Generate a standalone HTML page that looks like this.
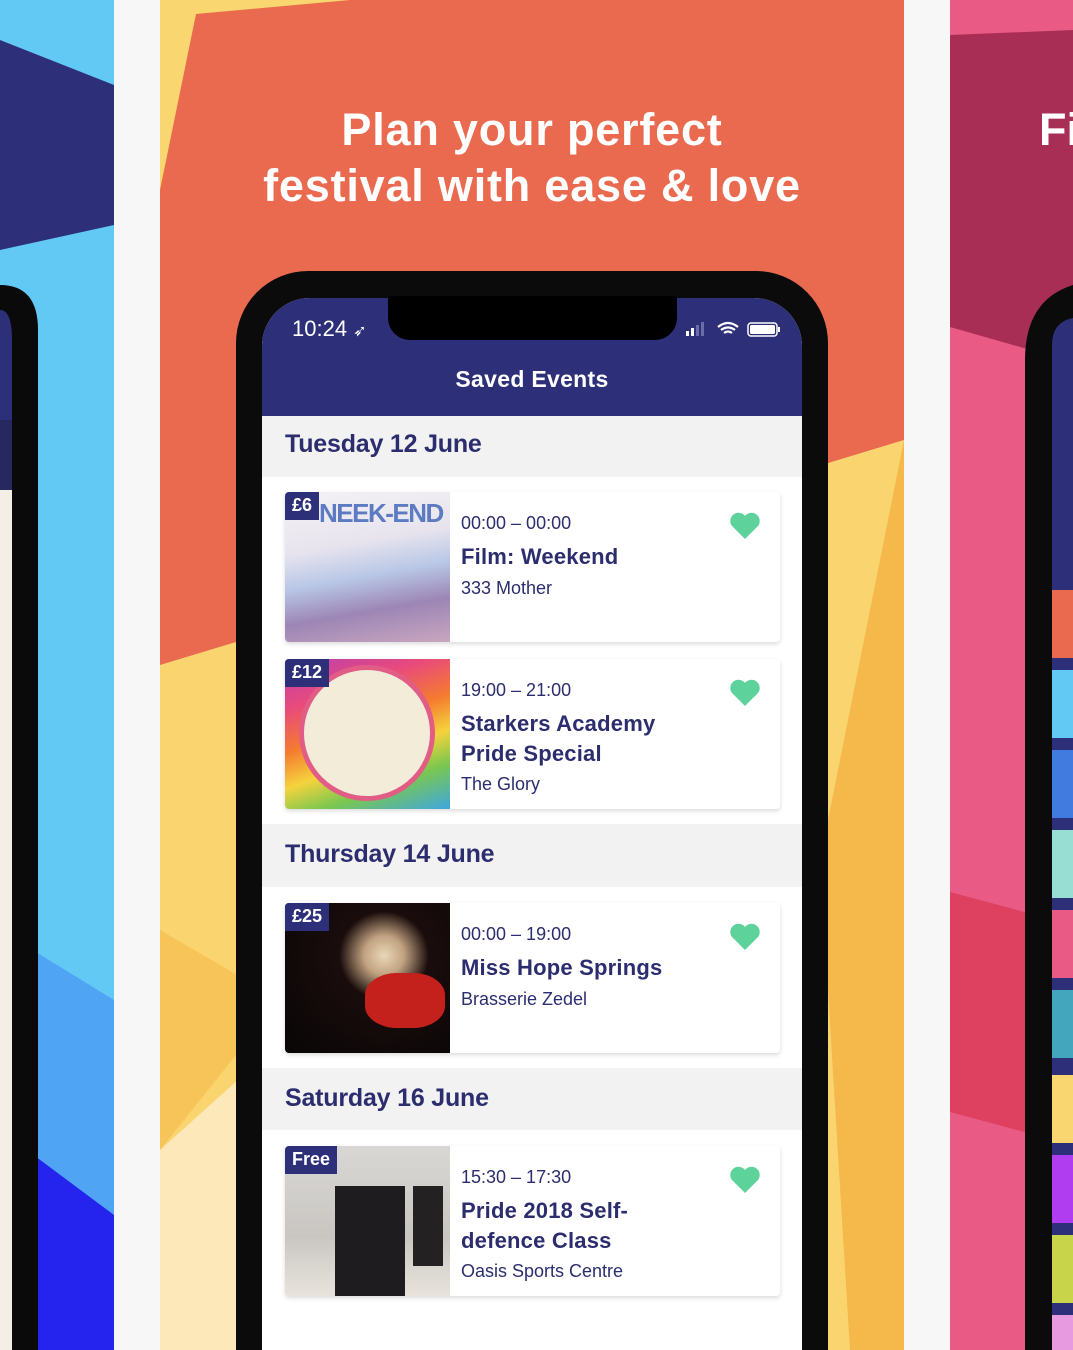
<!DOCTYPE html>
<html><head><meta charset="utf-8"><style>
*{margin:0;padding:0;box-sizing:border-box}
html{width:1073px;height:1350px;overflow:hidden}
body{width:1073px;height:1350px;overflow:hidden;background:#f7f7f7;position:relative;font-family:"Liberation Sans",sans-serif}
.abs{position:absolute}
.sec{position:absolute;left:262px;width:540px;background:#f2f2f2;color:#2b2d6e;font-weight:bold;font-size:25px;padding-left:23px;letter-spacing:-0.2px}
.card{position:absolute;left:285px;width:495px;height:150px;background:#fff;border-radius:4px;box-shadow:0 2px 5px rgba(0,0,0,.15);overflow:hidden}
.img{position:absolute;left:0;top:0;width:165px;height:150px}
.price{position:absolute;left:0;top:0;background:#2d3079;color:#fff;font-weight:bold;font-size:18px;padding:3px 7px 4px 7px}
.t{position:absolute;left:176px;top:21px;font-size:18px;color:#2b2d6e}
.n{position:absolute;left:176px;top:50px;font-size:22px;font-weight:bold;color:#2b2d6e;line-height:30px;letter-spacing:0.2px}
.v{position:absolute;left:176px;font-size:18px;color:#2b2d6e}
.heart{position:absolute;left:444px;top:20px}
</style></head><body>
<svg class="abs" style="left:0;top:0" width="114" height="1350">
<rect width="114" height="1350" fill="#62c9f5"/>
<polygon points="0,40 114,85 114,225 0,250" fill="#2d3079"/>
<polygon points="0,930 114,1000 114,1350 0,1350" fill="#4fa4f3"/>
<polygon points="0,1130 114,1215 114,1350 0,1350" fill="#2424ee"/>
<rect x="0" y="290" width="12" height="1060" fill="#f3efe6"/>
<rect x="0" y="290" width="12" height="130" fill="#2d3079"/>
<rect x="0" y="420" width="12" height="70" fill="#26285f"/>
<path d="M0,285 Q38,285 38,330 L38,1350 L12,1350 L12,340 Q12,310 0,310 Z" fill="#0a0a0a"/>
</svg>
<svg class="abs" style="left:160px;top:0" width="744" height="1350">
<rect width="744" height="1350" fill="#fad46f"/>
<polygon points="0,0 744,0 744,440 0,665" fill="#ea6a4f"/>
<polygon points="0,0 190,0 36,14 0,190" fill="#f9d66f"/>
<polygon points="744,440 744,1350 690,1350 660,860" fill="#f5b84a"/>
<polygon points="0,930 120,1000 0,1150" fill="#f7c45a"/>
<polygon points="0,1150 100,1060 120,1350 0,1350" fill="#fce8b8"/>
</svg>
<div class="abs" style="left:160px;top:102px;width:744px;text-align:center;color:#fff;font-weight:bold;font-size:45px;line-height:56px;letter-spacing:0.8px">Plan your perfect<br>festival with ease &amp; love</div>
<div class="abs" style="left:236px;top:271px;width:592px;height:1079px;background:#0b0b0b;border-radius:72px 72px 0 0"></div>
<div class="abs" style="left:262px;top:298px;width:540px;height:1052px;background:#fff;border-radius:48px 48px 0 0;overflow:hidden">
 <div class="abs" style="left:0;top:0;width:540px;height:118px;background:#2d3079"></div>
</div>
<div class="abs" style="left:388px;top:296px;width:289px;height:44px;background:#000;border-radius:0 0 22px 22px"></div>
<div class="abs" style="left:292px;top:316px;color:#fff;font-size:22px">10:24 <span style="font-size:16px">➶</span></div>
<svg class="abs" style="left:684px;top:320px" width="100" height="20">
<rect x="2" y="11" width="3" height="5" fill="#fff"/><rect x="7" y="8" width="3" height="8" fill="#fff"/><rect x="12" y="5" width="3" height="11" fill="#6a6da8"/><rect x="17" y="2" width="3" height="14" fill="#6a6da8"/>
<path d="M34,7 Q44,-1 54,7 M37,10 Q44,5 51,10 M40,13 Q44,10 48,13" stroke="#fff" stroke-width="2.2" fill="none"/>
<rect x="64" y="3" width="29" height="13" rx="3" stroke="#fff" stroke-width="1.5" fill="none"/><rect x="66" y="5" width="25" height="9" rx="1.5" fill="#fff"/><rect x="94" y="7" width="2" height="5" fill="#fff"/>
</svg>
<div class="abs" style="left:262px;top:366px;width:540px;text-align:center;color:#fff;font-weight:bold;font-size:23px;letter-spacing:0.3px">Saved Events</div>

<div class="sec" style="top:416px;height:61px;line-height:56px">Tuesday 12 June</div>
<div class="sec" style="top:824px;height:63px;line-height:60px">Thursday 14 June</div>
<div class="sec" style="top:1068px;height:62px;line-height:60px">Saturday 16 June</div>

<div class="card" style="top:492px">
 <div class="img" style="background:linear-gradient(170deg,#f4f2f5 0%,#e8e4ee 35%,#b9c7e6 55%,#9c86b5 75%,#c9a6bf 100%)"></div>
 <div class="abs" style="left:34px;top:6px;color:#5d7bc2;font-size:26px;font-weight:bold;letter-spacing:-1.5px">NEEK-END</div>
 <div class="price">£6</div>
 <div class="t">00:00 – 00:00</div><div class="n">Film: Weekend</div><div class="v" style="top:86px">333 Mother</div>
 <svg class="heart" width="32" height="28" viewBox="0 0 32 28"><path d="M16,27 L3,14 A7.5,7.5 0 0 1 16,4 A7.5,7.5 0 0 1 29,14 Z" fill="#5dd39b"/></svg>
</div>
<div class="card" style="top:659px">
 <div class="img" style="background:linear-gradient(160deg,#b83fb3 0%,#e94b7a 25%,#f47b30 45%,#f5d33d 62%,#7ac74f 78%,#3fa7e0 100%)"></div>
 <div class="abs" style="left:14px;top:6px;width:136px;height:136px;border-radius:50%;background:#f3ecd8;border:5px solid #e25d86"></div>
 <div class="price">£12</div>
 <div class="t">19:00 – 21:00</div><div class="n">Starkers Academy<br>Pride Special</div><div class="v" style="top:115px">The Glory</div>
 <svg class="heart" width="32" height="28" viewBox="0 0 32 28"><path d="M16,27 L3,14 A7.5,7.5 0 0 1 16,4 A7.5,7.5 0 0 1 29,14 Z" fill="#5dd39b"/></svg>
</div>
<div class="card" style="top:903px">
 <div class="img" style="background:radial-gradient(ellipse at 60% 35%,#e8d6b8 0%,#c2a482 14%,#1a0c0c 32%,#080606 100%)"></div>
 <div class="abs" style="left:80px;top:70px;width:80px;height:55px;border-radius:40%;background:#c4201c"></div>
 <div class="price">£25</div>
 <div class="t">00:00 – 19:00</div><div class="n">Miss Hope Springs</div><div class="v" style="top:86px">Brasserie Zedel</div>
 <svg class="heart" width="32" height="28" viewBox="0 0 32 28"><path d="M16,27 L3,14 A7.5,7.5 0 0 1 16,4 A7.5,7.5 0 0 1 29,14 Z" fill="#5dd39b"/></svg>
</div>
<div class="card" style="top:1146px">
 <div class="img" style="background:linear-gradient(180deg,#d9d7d4 0%,#c9c6c2 60%,#e8e3dc 100%)"></div>
 <div class="abs" style="left:50px;top:40px;width:70px;height:110px;background:#1e1c1e"></div>
 <div class="abs" style="left:128px;top:40px;width:30px;height:80px;background:#232122"></div>
 <div class="price">Free</div>
 <div class="t">15:30 – 17:30</div><div class="n">Pride 2018 Self-<br>defence Class</div><div class="v" style="top:115px">Oasis Sports Centre</div>
 <svg class="heart" width="32" height="28" viewBox="0 0 32 28"><path d="M16,27 L3,14 A7.5,7.5 0 0 1 16,4 A7.5,7.5 0 0 1 29,14 Z" fill="#5dd39b"/></svg>
</div>

<svg class="abs" style="left:950px;top:0" width="123" height="1350">
<rect width="123" height="1350" fill="#e95a84"/>
<polygon points="0,35 123,30 123,362 0,327" fill="#a82e55"/>
<polygon points="0,892 123,925 123,1145 0,1112" fill="#de4160"/>
<path d="M75,1350 L75,360 Q75,300 123,285 L123,1350 Z" fill="#0b0b0b"/>
<path d="M102,1350 L102,345 Q102,322 123,318 L123,1350 Z" fill="#2d3079"/>
<rect x="102" y="590" width="21" height="68" fill="#ea6a4f"/>
<rect x="102" y="670" width="21" height="68" fill="#62c9f5"/>
<rect x="102" y="750" width="21" height="68" fill="#427be0"/>
<rect x="102" y="830" width="21" height="68" fill="#98ded2"/>
<rect x="102" y="910" width="21" height="68" fill="#e95a84"/>
<rect x="102" y="990" width="21" height="68" fill="#44a6bd"/>
<rect x="102" y="1075" width="21" height="68" fill="#f9d66f"/>
<rect x="102" y="1155" width="21" height="68" fill="#b03ef0"/>
<rect x="102" y="1235" width="21" height="68" fill="#c8d44a"/>
<rect x="102" y="1315" width="21" height="35" fill="#e89ae0"/>
</svg>
<div class="abs" style="left:1039px;top:102px;color:#fff;font-weight:bold;font-size:45px;line-height:56px">Fi</div>
</body></html>
